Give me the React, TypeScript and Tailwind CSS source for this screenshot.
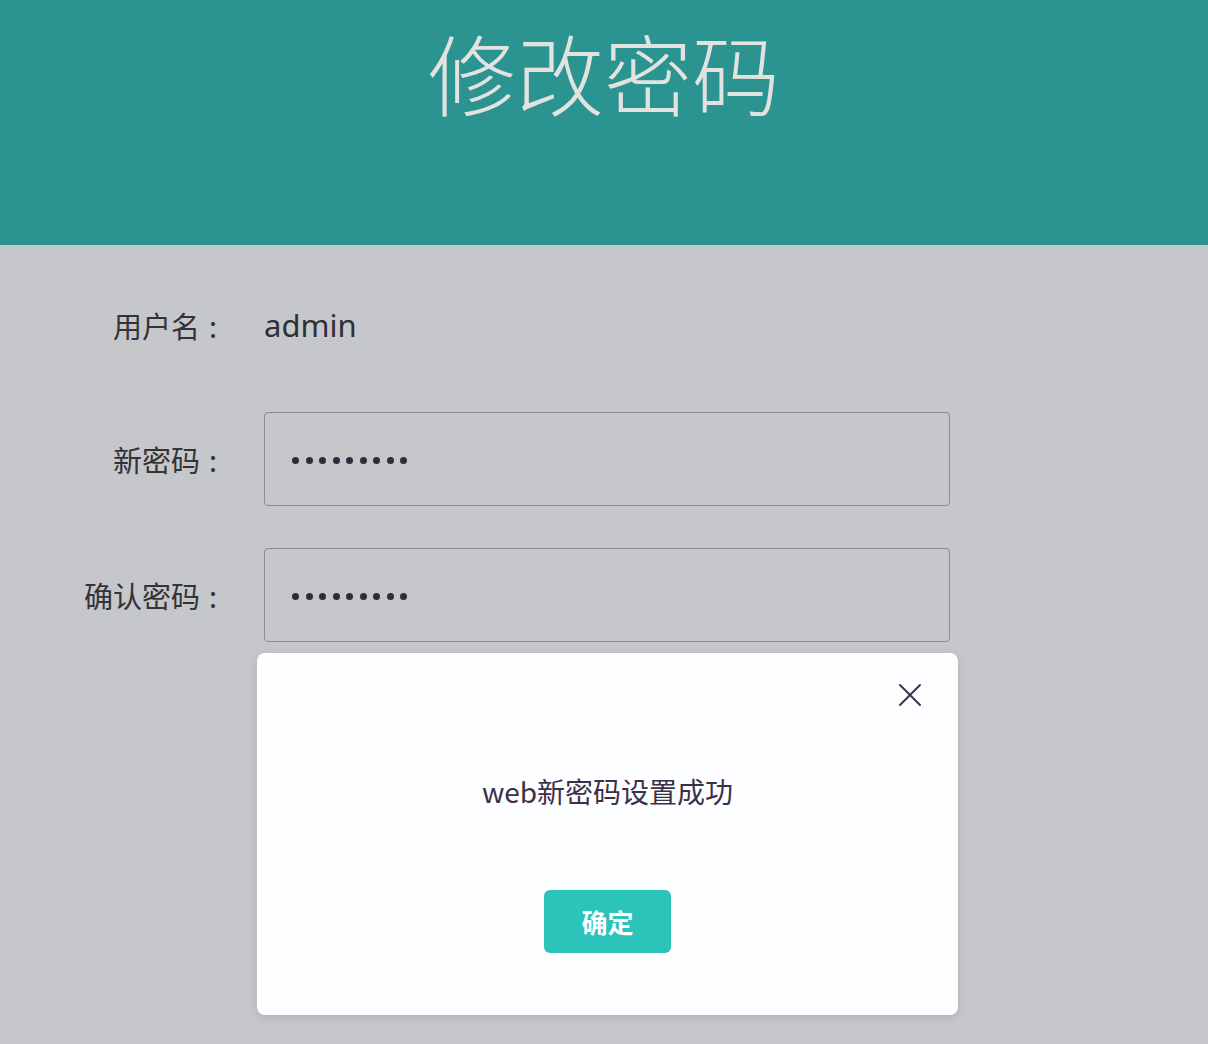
import React from "react";

const cjk = "font-['Noto_Sans_CJK_SC','Noto_Sans',sans-serif]";

const Dots = () => (
  <div className="mt-[3px] flex gap-[6.5px]">
    {Array.from({ length: 9 }).map((_, i) => (
      <span key={i} className="h-[7px] w-[7px] rounded-full bg-[#2e2c3c]" />
    ))}
  </div>
);

const Label = ({ text }: { text: string }) => (
  <div className="flex items-center justify-end text-[29px] leading-none text-[#333338]">
    <span>{text}</span>
    <span className="ml-[9px] mr-[5px]">:</span>
  </div>
);

export default function App() {
  return (
    <div className={`relative min-h-[1044px] w-full bg-[#c5c7ca] ${cjk}`}>
      <header className="flex h-[245px] justify-center bg-[#2c9490] pt-[27px]">
        <h1 className="text-[88px] font-light leading-[88px] text-[#e2e2e0]">修改密码</h1>
      </header>

      <div className="grid grid-cols-[222px_686px] gap-x-[42px] pt-[55px]">
        <Label text="用户名" />
        <div className="flex h-[50px] items-center font-['Noto_Sans',sans-serif] text-[31px] text-[#2f2f36]">
          admin
        </div>

        <div className="col-span-2 h-[62px]" />

        <Label text="新密码" />
        <div className="flex h-[94px] items-center rounded-[4px] border border-[#8c8c8e] px-[27px]">
          <Dots />
        </div>

        <div className="col-span-2 h-[42px]" />

        <Label text="确认密码" />
        <div className="flex h-[94px] items-center rounded-[4px] border border-[#8c8c8e] px-[27px]">
          <Dots />
        </div>
      </div>

      {/* success dialog */}
      <div className="absolute left-[257px] top-[653px] flex h-[362px] w-[701px] flex-col items-center rounded-[8px] bg-[#fdfeff] shadow-[0_2px_8px_rgba(0,0,0,0.12)]">
        <button className="absolute right-[36px] top-[30px] h-[24px] w-[24px]">
          <svg viewBox="0 0 24 24" className="h-[24px] w-[24px]" fill="none" stroke="#3b3450" strokeWidth="2" strokeLinecap="round">
            <path d="M2 2 L22 22 M22 2 L2 22" />
          </svg>
        </button>
        <div className="mt-[120px] text-[28px] leading-[36px] text-[#3b3048]">web新密码设置成功</div>
        <button className="mt-[81px] flex h-[63px] w-[127px] items-center justify-center rounded-[6px] bg-[#2cc3bb] text-[26px] font-bold text-white">
          确定
        </button>
      </div>
    </div>
  );
}
